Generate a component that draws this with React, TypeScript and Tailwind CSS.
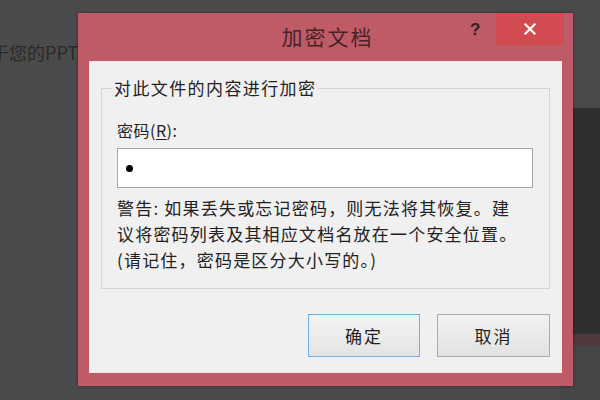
import React from "react";

export default function App() {
  const font = { fontFamily: '"Noto Sans CJK SC", "Noto Sans", sans-serif' };
  return (
    <div className="relative w-[600px] h-[400px] overflow-hidden bg-[#4a4a4a]" style={font}>
      {/* background content */}
      <div className="absolute left-[-9px] top-[38px] text-[18px] leading-[28px] text-[#2a2a2a]">于您的PPT文</div>
      <div className="absolute left-[560px] top-[108px] w-[40px] h-[226px] bg-[#2f2f2f]" />
      <div className="absolute left-[560px] top-[334px] w-[40px] h-[12px] bg-[#4e3a3b]" />
      <div className="absolute left-[560px] top-[346px] w-[40px] h-[54px] bg-[#464646]" />

      {/* dialog window */}
      <div className="absolute left-[78px] top-[13px] w-[495px] h-[373px] bg-[#be5b67] flex flex-col px-[11px] pb-[13px] shadow-[0_0_3px_rgba(0,0,0,0.4)]">
        <div className="relative h-[48px] shrink-0 flex items-center justify-center">
          <span className="text-[21px] leading-[28px] tracking-[2px] text-[#4a2329] mt-[-2px] ml-[4px]">加密文档</span>
          <span className="absolute left-[381px] top-[4px] text-[17px] font-bold text-[#3a1e22]" style={{ fontFamily: '"Liberation Sans", sans-serif' }}>?</span>
          <div className="absolute right-[-2px] top-0 w-[68px] h-[32px] bg-[#d14b51] flex items-center justify-center">
            <svg width="12" height="12" viewBox="0 0 12 12">
              <path d="M1.5 1.5 L10.5 10.5 M10.5 1.5 L1.5 10.5" stroke="#ffffff" strokeWidth="2.2" strokeLinecap="square" />
            </svg>
          </div>
        </div>
        <div className="flex-1 bg-[#f0f0f0] border border-[#f9e4e6] flex flex-col px-[11px] pt-[26px] text-[#222]">
          <div className="relative h-[201px] border border-[#d6d6d6] flex flex-col pl-[15px] pr-[15px] pt-[29px]">
            <div className="absolute left-[10px] top-[-14px] bg-[#f0f0f0] px-[2px] text-[17px] leading-[26px] tracking-[1.4px]">对此文件的内容进行加密</div>
            <div className="text-[16px] leading-[24px] tracking-[0.5px]">
              密码(<span className="underline underline-offset-2">R</span>):
            </div>
            <div className="mt-[6px] h-[40px] w-[416px] bg-white border border-[#a8a8a8] flex items-center pl-[8px]">
              <div className="w-[7px] h-[7px] rounded-full bg-black" />
            </div>
            <div className="mt-[7px] text-[17px] leading-[26px] tracking-[1.2px] whitespace-nowrap">
              <div>警告: 如果丢失或忘记密码，则无法将其恢复。建</div>
              <div>议将密码列表及其相应文档名放在一个安全位置。</div>
              <div>(请记住，密码是区分大小写的。)</div>
            </div>
          </div>
          <div className="flex justify-end gap-[17px] mt-[25px]">
            <button className="w-[112px] h-[43px] border border-[#6fb0e2] bg-gradient-to-b from-[#f4f4f4] to-[#e4e4e4] text-[17px] tracking-[2px] text-[#222]">确定</button>
            <button className="w-[113px] h-[43px] border border-[#acacac] bg-gradient-to-b from-[#f2f2f2] to-[#e2e2e2] text-[17px] tracking-[2px] text-[#222]">取消</button>
          </div>
        </div>
      </div>
    </div>
  );
}
